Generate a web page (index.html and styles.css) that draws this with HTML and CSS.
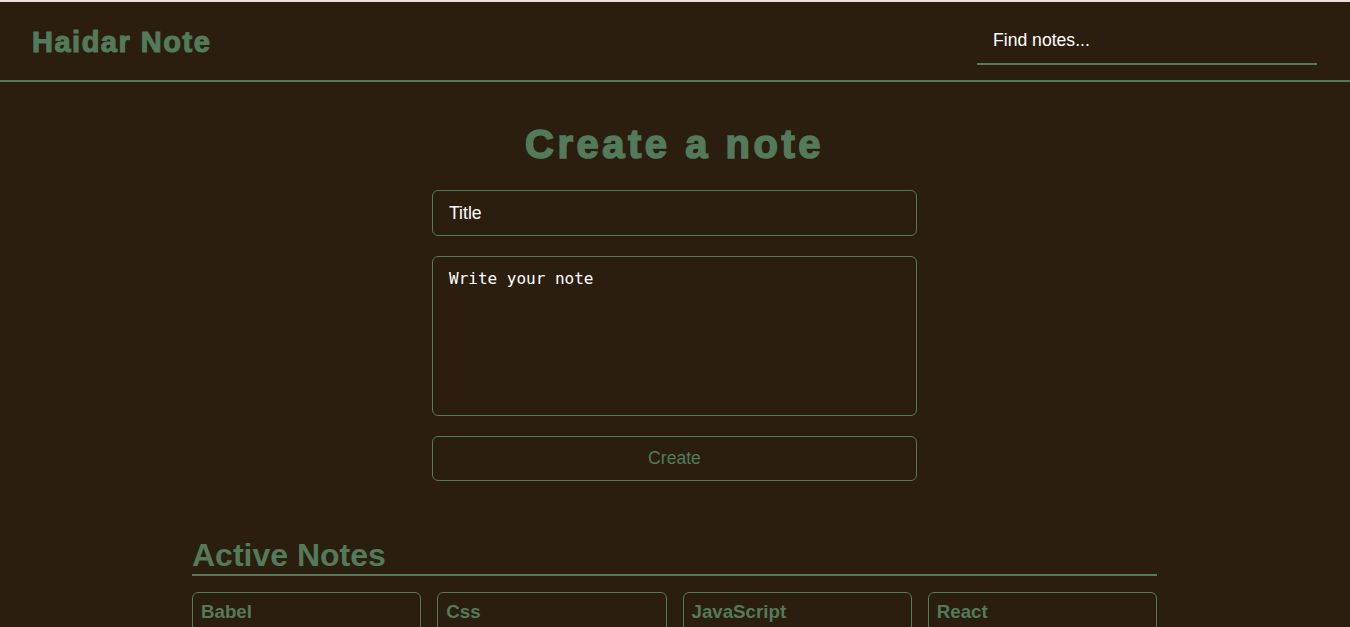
FILE: index.html
```html
<!DOCTYPE html>
<html lang="en">
<head>
<meta charset="utf-8">
<title>Haidar Note</title>
<link rel="stylesheet" href="styles.css">
</head>
<body>
<div class="topstrip"></div>
<header class="header">
  <h1 class="logo">Haidar Note</h1>
  <input class="search" type="text" placeholder="Find notes...">
</header>
<main class="main">
  <section class="create">
    <h2 class="create-title">Create a note</h2>
    <form class="form">
      <input class="field" type="text" placeholder="Title">
      <textarea class="field area" placeholder="Write your note"></textarea>
      <button class="btn" type="button">Create</button>
    </form>
  </section>
  <section class="notes">
    <h2 class="notes-title">Active Notes</h2>
    <div class="grid">
      <article class="card"><h3 class="card-title">Babel</h3></article>
      <article class="card"><h3 class="card-title">Css</h3></article>
      <article class="card"><h3 class="card-title">JavaScript</h3></article>
      <article class="card"><h3 class="card-title">React</h3></article>
    </div>
  </section>
</main>
</body>
</html>
```
FILE: styles.css
```css
* { box-sizing: border-box; }
html, body { margin: 0; padding: 0; }
body {
  background: #2c1e0e;
  font-family: "Liberation Sans", Arial, sans-serif;
  color: #fff;
  overflow: hidden;
  height: 627px;
}
.topstrip { height: 2px; background: #efdfdb; }
.header {
  height: 80px;
  display: flex;
  align-items: center;
  justify-content: space-between;
  padding: 0 33px 0 32px;
  border-bottom: 2px solid #527a5b;
}
.logo {
  margin: 3px 0 0;
  font-size: 29px;
  font-weight: 900;
  letter-spacing: 1.5px;
  color: #527a5b;
  -webkit-text-stroke: 1.1px #527a5b;
}
.search {
  width: 340px;
  height: 46px;
  margin-top: 1px;
  padding: 0 16px;
  background: transparent;
  border: none;
  border-bottom: 2px solid #527a5b;
  color: #fff;
  font-family: "Liberation Sans", Arial, sans-serif;
  font-size: 17.6px;
  outline: none;
}
.search::placeholder { color: #fff; }
.main { display: flex; flex-direction: column; align-items: center; padding-right: 1px; }
.create { display: flex; flex-direction: column; align-items: center; padding-top: 40px; }
.create-title {
  margin: 0 0 23px;
  font-size: 40px;
  font-weight: 900;
  letter-spacing: 3.5px;
  color: #527a5b;
  -webkit-text-stroke: 1.6px #527a5b;
}
.form { width: 485px; display: flex; flex-direction: column; gap: 20px; }
.field {
  width: 100%;
  height: 46px;
  padding: 0 16px;
  background: transparent;
  border: 1px solid #527a5b;
  border-radius: 6px;
  color: #fff;
  font-family: "Liberation Sans", Arial, sans-serif;
  font-size: 17.6px;
  outline: none;
}
.field::placeholder { color: #fff; }
.area {
  height: 160px;
  padding: 12px 16px;
  resize: none;
  font-family: "DejaVu Sans Mono", monospace;
  font-size: 16px;
}
.btn {
  height: 45px;
  background: transparent;
  border: 1px solid #527a5b;
  border-radius: 6px;
  color: #527a5b;
  font-family: "Liberation Sans", Arial, sans-serif;
  font-size: 17.6px;
}
.notes { width: 965px; margin-top: 56px; }
.notes-title {
  margin: 0;
  font-size: 32px;
  font-weight: 700;
  color: #527a5b;
  border-bottom: 2px solid #527a5b;
}
.grid {
  margin-top: 16px;
  display: grid;
  grid-template-columns: repeat(4, 1fr);
  gap: 16px;
}
.card {
  height: 120px;
  padding: 8px;
  border: 1px solid #527a5b;
  border-radius: 6px;
}
.card-title {
  margin: 0;
  font-size: 18.72px;
  font-weight: 700;
  color: #527a5b;
}
```
